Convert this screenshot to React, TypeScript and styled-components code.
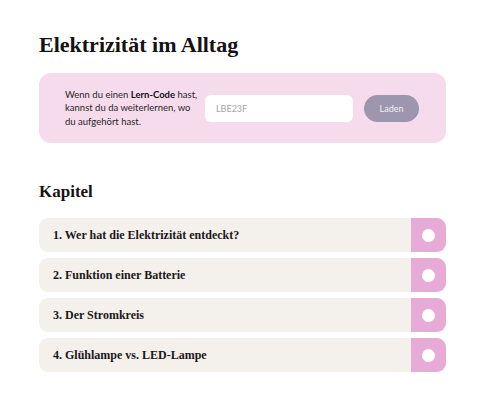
import styled, { createGlobalStyle } from 'styled-components'

const GlobalStyle = createGlobalStyle`
  * {
    margin: 0;
    padding: 0;
    box-sizing: border-box;
  }
  body {
    background: #ffffff;
    font-family: "Lato", "Open Sans", sans-serif;
    color: #1e1b1c;
  }
`

const Page = styled.div`
  width: 480px;
  padding: 30px 34px 0 39px;
`

const Title = styled.h1`
  font-family: "Liberation Serif", "DejaVu Serif", serif;
  font-weight: 700;
  font-size: 22px;
  line-height: 29px;
  color: #151213;
`

const CodePanel = styled.div`
  margin-top: 14px;
  height: 70px;
  background: #f5dbeb;
  border-radius: 12px;
  display: flex;
  align-items: center;
  padding: 0 27px 0 26px;
`

const Hint = styled.p`
  width: 134px;
  font-size: 9.5px;
  line-height: 13.5px;
  color: #2a2628;
`

const Strong = styled.strong`
  font-weight: 700;
  color: #151213;
`

const CodeInput = styled.input`
  margin-left: 6px;
  width: 148px;
  height: 27px;
  border: none;
  border-radius: 6px;
  background: #ffffff;
  padding: 0 11px;
  font-family: "Lato", "Open Sans", sans-serif;
  font-size: 9px;
  color: #a8a4aa;
  outline: none;
  &::placeholder {
    color: #a8a4aa;
  }
`

const LoadButton = styled.button`
  margin-left: auto;
  width: 55px;
  height: 27px;
  border: none;
  border-radius: 14px;
  background: #9c97ae;
  color: #f1eef4;
  font-family: "Lato", "Open Sans", sans-serif;
  font-size: 9px;
`

const Heading = styled.h2`
  margin-top: 38px;
  font-family: "Liberation Serif", "DejaVu Serif", serif;
  font-weight: 700;
  font-size: 17px;
  line-height: 22px;
  color: #151213;
`

const ChapterList = styled.ul`
  list-style: none;
  margin-top: 15px;
  display: flex;
  flex-direction: column;
  gap: 6px;
`

const Chapter = styled.li`
  height: 34px;
  display: flex;
  align-items: stretch;
  border-radius: 9px;
  overflow: hidden;
  background: #f4f0ec;
`

const ChapterTitle = styled.span`
  flex: 1;
  display: flex;
  align-items: center;
  padding-left: 14px;
  font-family: "Liberation Serif", "DejaVu Serif", serif;
  font-weight: 700;
  font-size: 12px;
  color: #1b1819;
`

const StatusBox = styled.span`
  width: 35px;
  display: flex;
  align-items: center;
  justify-content: center;
  background: #e8aad6;
`

const StatusDot = styled.span<{ $done?: boolean }>`
  width: 13px;
  height: 13px;
  border-radius: 50%;
  background: ${p => (p.$done ? '#9c97ae' : '#ffffff')};
`

const chapters = [
  '1. Wer hat die Elektrizität entdeckt?',
  '2. Funktion einer Batterie',
  '3. Der Stromkreis',
  '4. Glühlampe vs. LED-Lampe',
]

const App = () => {
  return (
    <>
      <GlobalStyle />
      <Page>
        <Title>Elektrizität im Alltag</Title>
        <CodePanel>
          <Hint>
            Wenn du einen <Strong>Lern-Code</Strong> hast, kannst du da weiterlernen, wo du aufgehört hast.
          </Hint>
          <CodeInput placeholder="LBE23F" />
          <LoadButton>Laden</LoadButton>
        </CodePanel>
        <Heading>Kapitel</Heading>
        <ChapterList>
          {chapters.map(c => (
            <Chapter key={c}>
              <ChapterTitle>{c}</ChapterTitle>
              <StatusBox>
                <StatusDot />
              </StatusBox>
            </Chapter>
          ))}
        </ChapterList>
      </Page>
    </>
  )
}

export default App
